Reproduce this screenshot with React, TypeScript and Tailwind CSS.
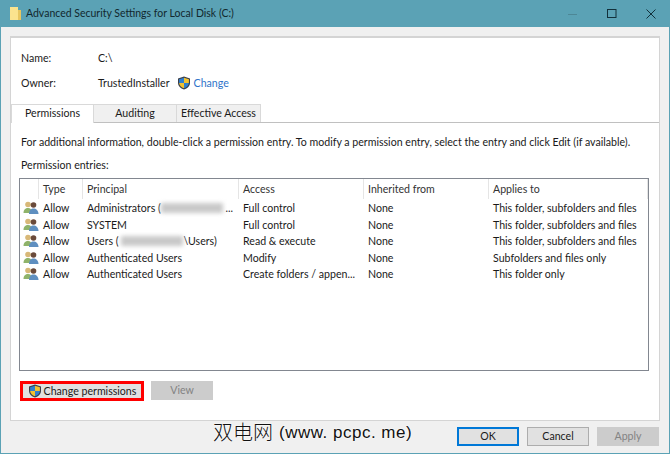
import type { ReactNode } from 'react';

const ROWS = [
  { principal: 'admin', access: 'Full control', applies: 'This folder, subfolders and files' },
  { principal: 'SYSTEM', access: 'Full control', applies: 'This folder, subfolders and files' },
  { principal: 'users', access: 'Read & execute', applies: 'This folder, subfolders and files' },
  { principal: 'Authenticated Users', access: 'Modify', applies: 'Subfolders and files only' },
  { principal: 'Authenticated Users', access: 'Create folders / appen...', applies: 'This folder only' },
];

const GRID = 'grid grid-cols-[19px_44px_156px_125px_125px_1fr]';

function Shield({ size = 14 }: { size?: number }) {
  return (
    <svg width={size} height={size} viewBox="0 0 14 14" className="shrink-0">
      <path d="M7 .5 13 2.5V7c0 3-2.5 5.3-6 6.5C3.500 12.300 1 10 1 7V2.500Z" fill="#3a3f4a" />
      <path d="M7 1.700V7H2.100V3.200Z" fill="#2f7fd0" />
      <path d="M7 1.700 11.900 3.200V7H7Z" fill="#f2c230" />
      <path d="M2.100 7H7v5.300C4.300 11.300 2.300 9.400 2.100 7Z" fill="#f2c230" />
      <path d="M7 7h4.900c-.2 2.400-2.200 4.300-4.900 5.300Z" fill="#2f7fd0" />
    </svg>
  );
}

function UsersIcon() {
  return (
    <svg width="16" height="14" viewBox="0 0 16 14" className="shrink-0">
      <circle cx="5" cy="3.500" r="2.800" fill="#d8b878" />
      <path d="M.5 12c0-3.500 2-5 4.500-5s4 1.500 4 5Z" fill="#8fb36a" />
      <circle cx="10.500" cy="4" r="2.800" fill="#6a4a3a" />
      <path d="M6 13c0-3.500 2-5.500 4.500-5.500S15.500 9.500 15.500 13Z" fill="#5f8fc0" />
    </svg>
  );
}

function Tab({ active, w, children }: { active?: boolean; w: string; children: ReactNode }) {
  return (
    <div
      className={`${w} flex items-center justify-center pb-px border border-b-0 border-[#d9d9d9] -mr-px ${
        active ? 'bg-white relative z-10 h-[19px] -mb-px' : 'bg-[#f0f0f0] h-[18px]'
      }`}
    >
      {children}
    </div>
  );
}

function Blur({ w }: { w: string }) {
  return <span className={`inline-block ${w} h-[10px] bg-[#c9c9c9] blur-[2px] align-top`} />;
}

function Btn({ w, disabled, focus, children }: { w: string; disabled?: boolean; focus?: boolean; children: ReactNode }) {
  return (
    <div
      className={`${w} h-[19px] flex items-center justify-center ${
        disabled
          ? 'bg-[#cccccc] border border-[#cccccc] text-[#838383]'
          : focus
            ? 'bg-[#e1e1e1] border-2 border-[#0078d7]'
            : 'bg-[#e1e1e1] border border-[#adadad]'
      }`}
    >
      {children}
    </div>
  );
}

export default function App() {
  return (
    <div className="w-[670px] h-[454px] flex flex-col bg-[#f0f0f0] border border-t-0 border-[#5ba2b5] font-['Lato','Noto_Sans',sans-serif] text-[10.6px] leading-none text-[#1a1a1a] overflow-hidden relative">
      {/* Title bar */}
      <div className="h-[27px] -mx-px bg-[#5ba2b5] flex items-center shrink-0">
        <svg width="12" height="14" viewBox="0 0 12 14" className="ml-[10px] mr-[4px]">
          <path d="M0 0h8v13H0Z" fill="#fbe38e" />
          <path d="M8 3h3v10H8Z" fill="#e8c660" />
        </svg>
        <span className="text-[10.5px] text-[#12282e]">Advanced Security Settings for Local Disk (C:)</span>
        <div className="ml-auto flex items-center">
          <svg width="10" height="10" viewBox="0 0 10 10" className="mr-[29px]"><path d="M0 5.500h9" stroke="#4d8796" /></svg>
          <svg width="10" height="10" viewBox="0 0 10 10" className="mr-[29px]"><rect x=".5" y=".5" width="8.500" height="8" fill="none" stroke="#12303a" /></svg>
          <svg width="10" height="10" viewBox="0 0 10 10" className="mr-[14px]"><path d="M.5.500l9 9M9.500.500l-9 9" stroke="#12303a" /></svg>
        </div>
      </div>

      {/* Main panel */}
      <div className="mt-[9px] mx-[9px] h-[385px] bg-white border-t-2 border-x border-b border-[#d4d4d4] flex flex-col shrink-0">
        <div className="h-[65px] shrink-0 flex flex-col pl-[10px] pt-[14px] gap-[13px]">
          <div className="flex items-center h-[12px]">
            <span className="w-[77px]">Name:</span>
            <span>C:\</span>
          </div>
          <div className="flex items-center h-[12px]">
            <span className="w-[77px]">Owner:</span>
            <span>TrustedInstaller</span>
            <span className="ml-[7px] mr-[3px]"><Shield /></span>
            <span className="text-[#2f74c9]">Change</span>
          </div>
        </div>

        <div className="flex items-end h-[19px] shrink-0">
          <Tab active w="w-[83px]">Permissions</Tab>
          <Tab w="w-[84px]">Auditing</Tab>
          <Tab w="w-[85px]">Effective Access</Tab>
        </div>

        <div className="flex-1 border-t border-[#c0c0c0] pl-[8px] pr-[10px] flex flex-col">
          <div className="pt-[14px] pl-[2px] whitespace-nowrap">For additional information, double-click a permission entry. To modify a permission entry, select the entry and click Edit (if available).</div>
          <div className="pt-[12px] pl-[2px]">Permission entries:</div>

          {/* Entries table */}
          <div className="mt-[8px] h-[193px] border border-[#828790] shrink-0">
            <div className={`${GRID} h-[20px] items-center`}>
              <div className="h-full border-r border-[#e5e5e5]" />
              {['Type', 'Principal', 'Access', 'Inherited from', 'Applies to'].map((h) => (
                <div key={h} className="h-full flex items-center pl-[4px] border-r border-[#e5e5e5] text-[#333]">
                  {h}
                </div>
              ))}
            </div>
            <div className="pt-[1px]">
              {ROWS.map((r, i) => (
                <div key={i} className={`${GRID} h-[16.5px] items-center`}>
                  <div className="pl-[3px]"><UsersIcon /></div>
                  <div className="pl-[4px]">Allow</div>
                  <div className="pl-[4px] whitespace-nowrap">
                    {r.principal === 'admin' ? (
                      <>Administrators (<Blur w="w-[62px]" /> ...</>
                    ) : r.principal === 'users' ? (
                      <>Users ( <Blur w="w-[62px]" />\Users)</>
                    ) : (
                      r.principal
                    )}
                  </div>
                  <div className="pl-[4px] whitespace-nowrap">{r.access}</div>
                  <div className="pl-[4px]">None</div>
                  <div className="pl-[4px] whitespace-nowrap">{r.applies}</div>
                </div>
              ))}
            </div>
          </div>

          <div className="mt-[10px] ml-px flex items-start gap-[7px]">
            <div className="w-[124px] h-[20px] border-[3px] border-[#ff0000] bg-[#e1e1e1] flex items-center justify-center gap-[2px] whitespace-nowrap">
              <Shield />
              <span>Change permissions</span>
            </div>
            <Btn w="w-[62px]" disabled>View</Btn>
          </div>
        </div>
      </div>

      {/* Dialog buttons */}
      <div className="flex justify-end gap-[8px] mr-[10px] mt-[6px]">
        <Btn w="w-[62px]" focus>OK</Btn>
        <Btn w="w-[62px]">Cancel</Btn>
        <Btn w="w-[62px]" disabled>Apply</Btn>
      </div>

      {/* Site watermark over the dialog */}
      <div className="absolute left-[212px] top-[421px] h-[22px] flex items-center text-[20px] text-[#111] font-['Noto_Sans_CJK_SC',sans-serif] font-light [text-shadow:0_0_2px_#fff,0_0_2px_#fff] whitespace-nowrap">
        双电网
        <span className="ml-[6px] font-['Liberation_Sans',sans-serif] text-[17px] tracking-[0.5px]">(www. pcpc. me)</span>
      </div>
    </div>
  );
}
